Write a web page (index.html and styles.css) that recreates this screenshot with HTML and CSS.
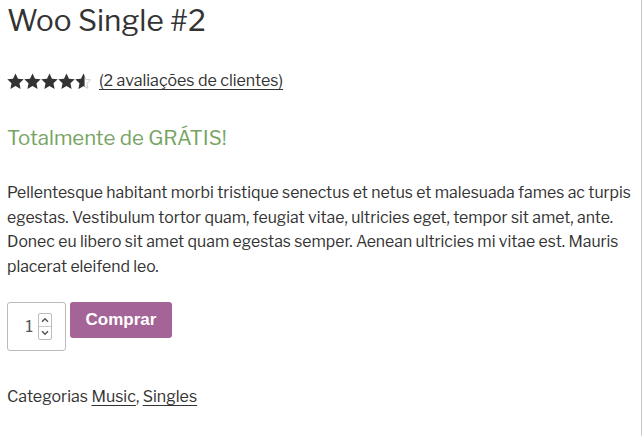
FILE: index.html
```html
<!DOCTYPE html>
<html lang="pt">
<head>
<meta charset="utf-8">
<link rel="stylesheet" href="styles.css">
</head>
<body>
<div class="page">
  <h1 class="title">Woo Single #2</h1>
  <div class="rating">
    <span class="stars">
      <svg class="star" viewBox="0 0 24 24"><path d="M12 0.6l3.5 7.4 8.1.9-6 5.6 1.6 8.1L12 18.5l-7.2 4.1 1.6-8.1-6-5.6 8.1-.9z"/></svg>
      <svg class="star" viewBox="0 0 24 24"><path d="M12 0.6l3.5 7.4 8.1.9-6 5.6 1.6 8.1L12 18.5l-7.2 4.1 1.6-8.1-6-5.6 8.1-.9z"/></svg>
      <svg class="star" viewBox="0 0 24 24"><path d="M12 0.6l3.5 7.4 8.1.9-6 5.6 1.6 8.1L12 18.5l-7.2 4.1 1.6-8.1-6-5.6 8.1-.9z"/></svg>
      <svg class="star" viewBox="0 0 24 24"><path d="M12 0.6l3.5 7.4 8.1.9-6 5.6 1.6 8.1L12 18.5l-7.2 4.1 1.6-8.1-6-5.6 8.1-.9z"/></svg>
      <svg class="star" viewBox="0 0 24 24">
        <defs><clipPath id="half"><rect x="0" y="0" width="13.5" height="24"/></clipPath></defs>
        <path class="star-empty" d="M12 2.4l3 6.5 7.1.8-5.3 4.9 1.4 7.1L12 18.2l-6.2 3.5 1.4-7.1-5.3-4.9 7.1-.8z"/>
        <path clip-path="url(#half)" d="M12 0.6l3.5 7.4 8.1.9-6 5.6 1.6 8.1L12 18.5l-7.2 4.1 1.6-8.1-6-5.6 8.1-.9z"/>
      </svg>
    </span>
    <a class="link" href="#">(2 avaliações de clientes)</a>
  </div>
  <p class="price">Totalmente de GRÁTIS!</p>
  <p class="desc">Pellentesque habitant morbi tristique senectus et netus et malesuada fames ac turpis egestas. Vestibulum tortor quam, feugiat vitae, ultricies eget, tempor sit amet, ante. Donec eu libero sit amet quam egestas semper. Aenean ultricies mi vitae est. Mauris placerat eleifend leo.</p>
  <form class="cart">
    <div class="qty">
      <span class="qty-val">1</span>
      <span class="spin">
        <span class="spin-btn"><svg viewBox="0 0 10 10"><path d="M2.5 6.5L5 4l2.5 2.5"/></svg></span>
        <span class="spin-btn"><svg viewBox="0 0 10 10"><path d="M2.5 3.5L5 6l2.5-2.5"/></svg></span>
      </span>
    </div>
    <button class="buy" type="button">Comprar</button>
  </form>
  <div class="meta">Categorias <a class="link" href="#">Music</a>, <a class="link" href="#">Singles</a></div>
</div>
</body>
</html>
```
FILE: styles.css
```css
html, body {
  margin: 0;
  padding: 0;
  background: #fff;
}
body {
  font-family: "Libre Franklin", Inter, "Open Sans", sans-serif;
  color: #333;
  font-size: 16px;
  line-height: 1.5;
  border-right: 1px solid #c8c8c8;
  min-height: 436px;
  box-sizing: border-box;
}
.page {
  padding: 0 3px 0 7px;
}
.title {
  margin: 0;
  padding-top: 2px;
  font-size: 29.7px;
  font-weight: 400;
  line-height: 36px;
  color: #333;
}
.rating {
  display: flex;
  align-items: center;
  gap: 7px;
  margin-top: 31px;
  height: 24px;
}
.stars {
  display: flex;
  gap: 0;
}
.star {
  width: 17px;
  height: 17px;
  fill: #333;
}
.star-empty {
  fill: none;
  stroke: #ccc;
  stroke-width: 1.4;
}
.link {
  color: #333;
  text-decoration: underline;
  text-underline-offset: 3px;
  text-decoration-thickness: 1px;
}
.price {
  margin: 0;
  margin-top: 30px;
  font-size: 20.4px;
  line-height: 30px;
  color: #77a464;
}
.desc {
  margin: 0;
  margin-top: 28px;
  font-size: 15.8px;
  line-height: 24.5px;
}
.cart {
  display: flex;
  align-items: flex-start;
  gap: 4px;
  margin-top: 23px;
}
.qty {
  width: 59px;
  height: 49px;
  box-sizing: border-box;
  border: 1px solid #bbb;
  border-radius: 3px;
  display: flex;
  align-items: center;
  justify-content: flex-end;
  padding-right: 13px;
  gap: 5px;
}
.qty-val {
  font-size: 16px;
  color: #555;
}
.spin {
  display: flex;
  flex-direction: column;
  border: 1px solid #bbb;
  border-radius: 2px;
  width: 12px;
}
.spin-btn {
  height: 12px;
  display: flex;
}
.spin-btn + .spin-btn {
  border-top: 1px solid #ccc;
}
.spin-btn svg {
  width: 12px;
  height: 12px;
  fill: none;
  stroke: #555;
  stroke-width: 1.2;
}
.buy {
  height: 36px;
  padding: 0;
  width: 102px;
  border: 0;
  border-radius: 3px;
  background: #a46497;
  color: #fff;
  font-family: "Liberation Sans", Arial, sans-serif;
  font-weight: 700;
  font-size: 17px;
}
.meta {
  margin-top: 34px;
  font-size: 16px;
}
```
